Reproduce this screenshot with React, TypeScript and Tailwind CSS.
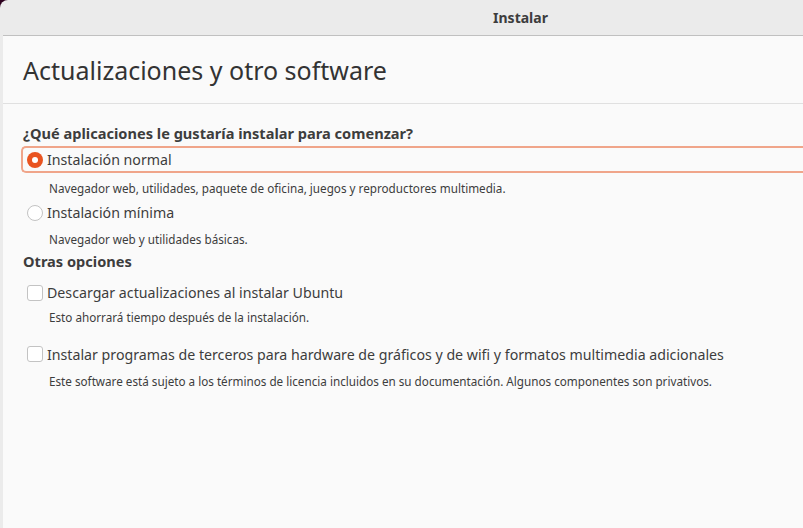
import React from "react";

const font = { fontFamily: '"Noto Sans", "Open Sans", sans-serif' };

function Radio({ checked }: { checked?: boolean }) {
  return checked ? (
    <span className="flex h-4 w-4 shrink-0 items-center justify-center rounded-full bg-[#e95420]">
      <span className="h-[6px] w-[6px] rounded-full bg-white" />
    </span>
  ) : (
    <span className="h-4 w-4 shrink-0 rounded-full border border-[#c3c3c3] bg-white" />
  );
}

function Checkbox() {
  return <span className="h-4 w-4 shrink-0 rounded-[3px] border border-[#c3c3c3] bg-white" />;
}

export default function App() {
  return (
    <div className="flex h-[528px] w-[803px] overflow-hidden bg-[#2c001e] text-[#3d3d3d]" style={font}>
      <div className="flex flex-1 flex-col overflow-hidden rounded-tl-[8px] bg-[#ebebeb] pl-[3px]">
        <div className="flex h-[36px] shrink-0 items-center justify-center border-b border-[#c0c0c0] pl-[235px] text-[14px] font-bold text-[#3d3d3d]">
          Instalar
        </div>
        <div className="flex flex-1 flex-col bg-[#fafafa]">
          <div className="flex h-[68px] shrink-0 items-center border-b border-[#e0e0e0] pl-[20px] pt-[2px] text-[25px] text-[#333]">
            Actualizaciones y otro software
          </div>
          <div className="flex flex-col pl-[20px] pt-[20px]">
            <div className="text-[14.6px] font-bold leading-[19px]">¿Qué aplicaciones le gustaría instalar para comenzar?</div>
            <div className="-ml-[2px] mt-[3px] flex h-[27px] items-center gap-[4px] rounded-l-[5px] border-2 border-r-0 border-[#f0a58a] pl-[4px]">
              <Radio checked />
              <span className="text-[14.2px]">Instalación normal</span>
            </div>
            <div className="mt-[7px] pl-[26px] text-[11.7px] leading-[17px]">
              Navegador web, utilidades, paquete de oficina, juegos y reproductores multimedia.
            </div>
            <div className="mt-[5px] flex items-center gap-[4px] pl-[4px]">
              <Radio />
              <span className="text-[14.2px]">Instalación mínima</span>
            </div>
            <div className="mt-[8px] pl-[26px] text-[11.7px] leading-[17px]">Navegador web y utilidades básicas.</div>
            <div className="mt-[4px] text-[14.6px] font-bold leading-[19px]">Otras opciones</div>
            <div className="mt-[11px] flex items-center gap-[4px] pl-[4px]">
              <Checkbox />
              <span className="text-[14.2px]">Descargar actualizaciones al instalar Ubuntu</span>
            </div>
            <div className="mt-[5px] pl-[26px] text-[11.7px] leading-[17px]">Esto ahorrará tiempo después de la instalación.</div>
            <div className="mt-[18px] flex items-center gap-[4px] pl-[4px]">
              <Checkbox />
              <span className="text-[14.2px]">Instalar programas de terceros para hardware de gráficos y de wifi y formatos multimedia adicionales</span>
            </div>
            <div className="mt-[8px] pl-[26px] text-[11.7px] leading-[17px]">
              Este software está sujeto a los términos de licencia incluidos en su documentación. Algunos componentes son privativos.
            </div>
          </div>
        </div>
      </div>
    </div>
  );
}
